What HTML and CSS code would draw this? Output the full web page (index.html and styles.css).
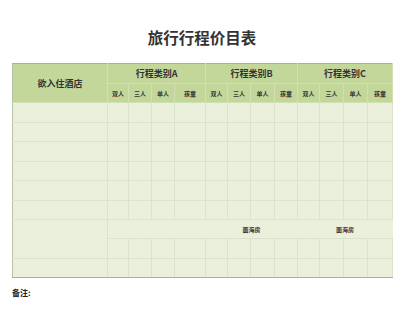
FILE: index.html
```html
<!DOCTYPE html>
<html lang="zh">
<head>
<meta charset="utf-8">
<link rel="stylesheet" href="styles.css">
</head>
<body>
<div class="page">
  <h1 class="title">旅行行程价目表</h1>
  <table class="sheet">
    <colgroup>
      <col class="c-hotel">
      <col class="w21"><col class="w23"><col class="w23"><col class="w31">
      <col class="w22"><col class="w23"><col class="w24"><col class="w23">
      <col class="w22"><col class="w24"><col class="w24"><col class="w25">
    </colgroup>
    <thead>
      <tr class="h1">
        <th rowspan="2" class="hotel">欲入住酒店</th>
        <th colspan="4" class="grp">行程类别A</th>
        <th colspan="4" class="grp">行程类别B</th>
        <th colspan="4" class="grp">行程类别C</th>
      </tr>
      <tr class="h2">
        <th>双人</th><th>三人</th><th>单人</th><th>孩童</th>
        <th>双人</th><th>三人</th><th>单人</th><th>孩童</th>
        <th>双人</th><th>三人</th><th>单人</th><th>孩童</th>
      </tr>
    </thead>
    <tbody>
      <tr class="r20"><td></td><td></td><td></td><td></td><td></td><td></td><td></td><td></td><td></td><td></td><td></td><td></td><td></td></tr>
      <tr class="r19"><td></td><td></td><td></td><td></td><td></td><td></td><td></td><td></td><td></td><td></td><td></td><td></td><td></td></tr>
      <tr class="r20"><td></td><td></td><td></td><td></td><td></td><td></td><td></td><td></td><td></td><td></td><td></td><td></td><td></td></tr>
      <tr class="r19"><td></td><td></td><td></td><td></td><td></td><td></td><td></td><td></td><td></td><td></td><td></td><td></td><td></td></tr>
      <tr class="r20"><td></td><td></td><td></td><td></td><td></td><td></td><td></td><td></td><td></td><td></td><td></td><td></td><td></td></tr>
      <tr class="r19"><td></td><td></td><td></td><td></td><td></td><td></td><td></td><td></td><td></td><td></td><td></td><td></td><td></td></tr>
      <tr class="r19 merged">
        <td rowspan="2"></td>
        <td colspan="4" class="m"></td>
        <td colspan="4" class="m label">面海房</td>
        <td colspan="4" class="m label">面海房</td>
      </tr>
      <tr class="r20"><td></td><td></td><td></td><td></td><td></td><td></td><td></td><td></td><td></td><td></td><td></td><td></td></tr>
      <tr class="r19"><td></td><td></td><td></td><td></td><td></td><td></td><td></td><td></td><td></td><td></td><td></td><td></td><td></td></tr>
    </tbody>
  </table>
  <div class="note">备注:</div>
</div>
</body>
</html>
```

FILE: styles.css
```css
html, body {
  margin: 0;
  padding: 0;
  background: #ffffff;
}

body {
  font-family: "Noto Sans CJK SC", "Noto Sans", "Liberation Sans", sans-serif;
  color: #333333;
}

.page {
  width: 404px;
  height: 312px;
  box-sizing: border-box;
  padding: 27px 12px 0 12px;
}

.title {
  margin: 0;
  height: 21px;
  line-height: 21px;
  font-size: 15.5px;
  font-weight: 700;
  text-align: center;
  color: #333333;
}

.sheet {
  margin-top: 15px;
  width: 380px;
  table-layout: fixed;
  border-collapse: collapse;
  border-spacing: 0;
  border-top: 1px solid #a7b293;
  border-bottom: 1px solid #a9b09a;
  border-left: 1px solid #b9c2a7;
}

.c-hotel { width: 95px; }
.w21 { width: 21px; }
.w22 { width: 22px; }
.w23 { width: 23px; }
.w24 { width: 24px; }
.w25 { width: 25px; }
.w31 { width: 31px; }

.sheet th {
  background: #c4d79b;
  border: 1px solid #d0e0b2;
  padding: 0;
  font-weight: 700;
  color: #333333;
  text-align: center;
  vertical-align: middle;
  white-space: nowrap;
}

.sheet thead tr:first-child th {
  border-top: 1px solid #a7b293;
}

.sheet th.hotel {
  border-left: 1px solid #b9c2a7;
  font-size: 9px;
}

.sheet tr.h1 {
  height: 20px;
}

.sheet tr.h1 .grp {
  font-size: 9px;
}

.sheet tr.h2 {
  height: 19px;
}

.sheet tr.h2 th {
  font-size: 6px;
}

.sheet td {
  background: #ebf0dc;
  border: 1px solid #dce2cb;
  padding: 0;
}

.sheet tbody tr:first-child td {
  border-top: 1px solid #c4d79b;
}

.sheet td:first-child {
  border-left: 1px solid #b9c2a7;
}

.sheet tr.r20 { height: 20px; }
.sheet tr.r19 { height: 19px; }

.sheet tbody tr:last-child td {
  border-bottom: 1px solid #a9b09a;
}

.sheet td.m {
  border-left-color: #ebf0dc;
  border-right-color: #ebf0dc;
}

.sheet td.m.label {
  font-size: 6px;
  font-weight: 700;
  text-align: center;
  vertical-align: middle;
  color: #333333;
}

.note {
  margin-top: 10px;
  font-size: 8px;
  line-height: 10px;
  font-weight: 700;
  color: #222222;
}
```
